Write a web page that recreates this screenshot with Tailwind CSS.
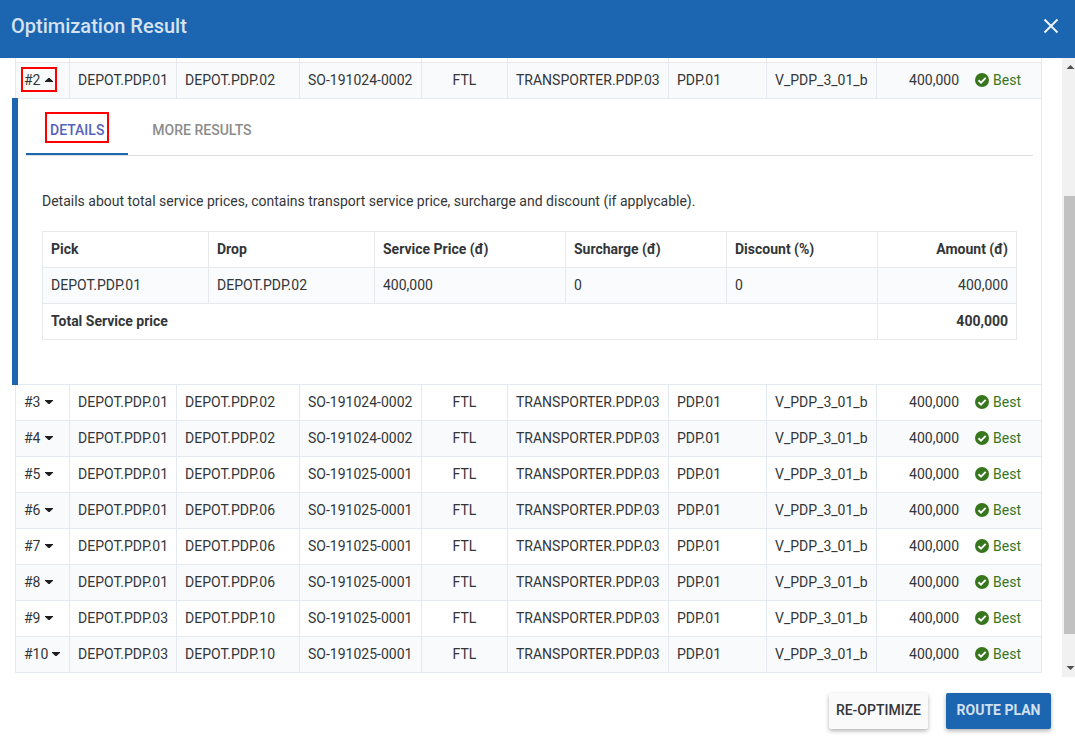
<!DOCTYPE html>
<html lang="en">
<head>
<meta charset="utf-8">
<title>Optimization Result</title>
<script src="https://cdn.jsdelivr.net/npm/@tailwindcss/browser@4"></script>
</head>
<body class="flex h-screen flex-col overflow-hidden bg-white font-[Roboto,sans-serif] text-sm text-[#333639]">
<header class="flex h-[58px] shrink-0 items-center justify-between bg-[#1c65b1] pr-4 pl-[11px] pb-[7px]">
  <h1 class="text-xl font-medium text-[#d5e2f0]">Optimization Result</h1>
  <button type="button" aria-label="Close" class="flex size-4 items-center justify-center text-[#edf3f9]">
    <svg class="size-4" viewBox="0 0 16 16" fill="none" stroke="currentColor" stroke-width="2"><path d="M1.500 1.500 14.500 14.500M14.500 1.500 1.500 14.500"/></svg>
  </button>
</header>

<main class="flex min-h-0 flex-1 overflow-hidden">
  <div class="min-w-0 flex-1 overflow-hidden pr-5 pl-[15px]">
    <table class="w-full table-fixed border-separate border-spacing-0 border-l border-[#e4e9ef]">
      <colgroup>
        <col class="w-[54px]"><col class="w-[107px]"><col class="w-[123px]"><col class="w-[122px]"><col class="w-[86px]"><col class="w-[161px]"><col class="w-[98px]"><col class="w-[110px]"><col>
      </colgroup>
      <tbody id="before"></tbody>
      <tbody>
        <tr>
          <td colspan="9" class="relative border-r border-b border-[#e4e9ef] p-0">
            <div class="absolute -top-px -bottom-px -left-1 w-1.5 bg-[#1c65b1]"></div>
            <div class="h-[285px] px-2 pt-2 pl-[10px]">
              <div role="tablist" class="flex h-[49px] border-b border-[#dcdee0]">
                <button type="button" role="tab" aria-selected="true" class="relative h-12 border-b-2 border-[#1c65b1] px-6 font-medium text-[#5562bd]">DETAILS<span class="absolute top-[5px] right-[19px] bottom-[10px] left-[19px] border-2 border-[#ff0000]"></span></button>
                <button type="button" role="tab" aria-selected="false" class="h-12 border-b-2 border-transparent px-6 font-medium text-[#8c8c8c]">MORE RESULTS</button>
              </div>
              <div role="tabpanel" class="px-4 pt-[35px]">
                <p class="leading-5">Details about total service prices, contains transport service price, surcharge and discount (if applycable).</p>
                <table class="mt-5 w-full table-fixed border-separate border-spacing-0 border-t border-l border-[#e6e9ec] text-left [&_td]:h-9 [&_td]:border-r [&_td]:border-b [&_td]:border-[#e6e9ec] [&_td]:px-2 [&_td]:pt-0 [&_td]:pb-0.5 [&_th]:h-9 [&_th]:border-r [&_th]:border-b [&_th]:border-[#e6e9ec] [&_th]:px-2 [&_th]:pt-0 [&_th]:pb-0.5 [&_th]:font-bold">
                  <colgroup><col class="w-[166px]"><col class="w-[166px]"><col class="w-[191px]"><col class="w-[161px]"><col class="w-[151px]"><col></colgroup>
                  <thead>
                    <tr><th>Pick</th><th>Drop</th><th>Service Price (đ)</th><th>Surcharge (đ)</th><th>Discount (%)</th><th class="text-right">Amount (đ)</th></tr>
                  </thead>
                  <tbody>
                    <tr class="bg-[#fafbfd]"><td>DEPOT.PDP.01</td><td>DEPOT.PDP.02</td><td>400,000</td><td>0</td><td>0</td><td class="text-right">400,000</td></tr>
                    <tr><th colspan="5">Total Service price</th><th class="text-right">400,000</th></tr>
                  </tbody>
                </table>
              </div>
            </div>
          </td>
        </tr>
      </tbody>
      <tbody id="after"></tbody>
    </table>
  </div>
  <div aria-hidden="true" class="flex w-[13px] shrink-0 flex-col overflow-hidden bg-[#f1f1f1] pl-0.5">
    <svg class="h-[18px] w-[17px] shrink-0 text-[#505050]" viewBox="0 0 17 18" fill="currentColor"><path d="M2.500 11h8L6.500 7z"/></svg>
    <div class="grow-[120]"></div>
    <div class="grow-[438] bg-[#c1c1c1]"></div>
    <div class="grow-[25]"></div>
    <svg class="h-[18px] w-[17px] shrink-0 text-[#505050]" viewBox="0 0 17 18" fill="currentColor"><path d="M2.500 7h8L6.500 11z"/></svg>
  </div>
</main>

<footer class="flex h-[63px] shrink-0 items-start justify-end gap-[18px] pt-4 pr-6">
  <button type="button" class="h-9 rounded-xs bg-[#fafafa] px-[7px] pb-0.5 font-medium shadow-[0_2px_4px_rgba(0,0,0,0.3)]">RE-OPTIMIZE</button>
  <button type="button" class="h-9 min-w-[105px] rounded-xs bg-[#1c65b1] px-[10px] pb-0.5 font-bold text-[#d2e0ef] shadow-[0_2px_4px_rgba(0,0,0,0.3)]">ROUTE PLAN</button>
</footer>

<script>
const cell = 'border-r border-b border-[#e4e9ef] px-2 pt-0 pb-0.5';
const row = (n, pick, drop, order) => `
<tr class="${n % 2 ? 'bg-white' : 'bg-[#f9fafc]'}">
  <td class="${cell} h-9"><button type="button" aria-expanded="${n === 2}" class="relative flex items-center gap-1">#${n}
    <svg class="h-1 w-2 text-[#1c1e20]" viewBox="0 0 8 4" fill="currentColor"><path d="${n === 2 ? 'M0 4h8v-.8L4.600 0h-1.200L0 3.200z' : 'M0 0h8v.8L4.600 4h-1.200L0 .8z'}"/></svg>
    ${n === 2 ? '<span class="absolute -top-[3px] -right-1 -bottom-0.5 -left-[3px] border-2 border-[#ff0000]"></span>' : ''}</button></td>
  <td class="${cell}">${pick}</td>
  <td class="${cell}">${drop}</td>
  <td class="${cell}">${order}</td>
  <td class="${cell} text-center">FTL</td>
  <td class="${cell}">TRANSPORTER.PDP.03</td>
  <td class="${cell}">PDP.01</td>
  <td class="${cell}">V_PDP_3_01_b</td>
  <td class="border-r border-b border-[#e4e9ef] pt-0 pr-5 pb-0.5"><div class="flex items-center justify-end gap-4"><span>400,000</span>
    <span class="flex items-center gap-1 text-[#38761d]"><svg class="size-3.5" viewBox="0 0 14 14"><circle cx="7" cy="7" r="7" fill="currentColor"/><path d="M3.500 7.200 6 9.600 10.700 4.900" fill="none" stroke="#fff" stroke-width="1.900"/></svg>Best</span></div></td>
</tr>`;
const strip = '<tr>' + '<td class="h-[5px] border-r border-b border-[#e4e9ef] p-0"></td>'.repeat(9) + '</tr>';
document.getElementById('before').innerHTML = strip + row(2, 'DEPOT.PDP.01', 'DEPOT.PDP.02', 'SO-191024-0002');
document.getElementById('after').innerHTML = [
  [3, 'DEPOT.PDP.01', 'DEPOT.PDP.02', 'SO-191024-0002'],
  [4, 'DEPOT.PDP.01', 'DEPOT.PDP.02', 'SO-191024-0002'],
  [5, 'DEPOT.PDP.01', 'DEPOT.PDP.06', 'SO-191025-0001'],
  [6, 'DEPOT.PDP.01', 'DEPOT.PDP.06', 'SO-191025-0001'],
  [7, 'DEPOT.PDP.01', 'DEPOT.PDP.06', 'SO-191025-0001'],
  [8, 'DEPOT.PDP.01', 'DEPOT.PDP.06', 'SO-191025-0001'],
  [9, 'DEPOT.PDP.03', 'DEPOT.PDP.10', 'SO-191025-0001'],
  [10, 'DEPOT.PDP.03', 'DEPOT.PDP.10', 'SO-191025-0001'],
].map(r => row(...r)).join('');
</script>
</body>
</html>
